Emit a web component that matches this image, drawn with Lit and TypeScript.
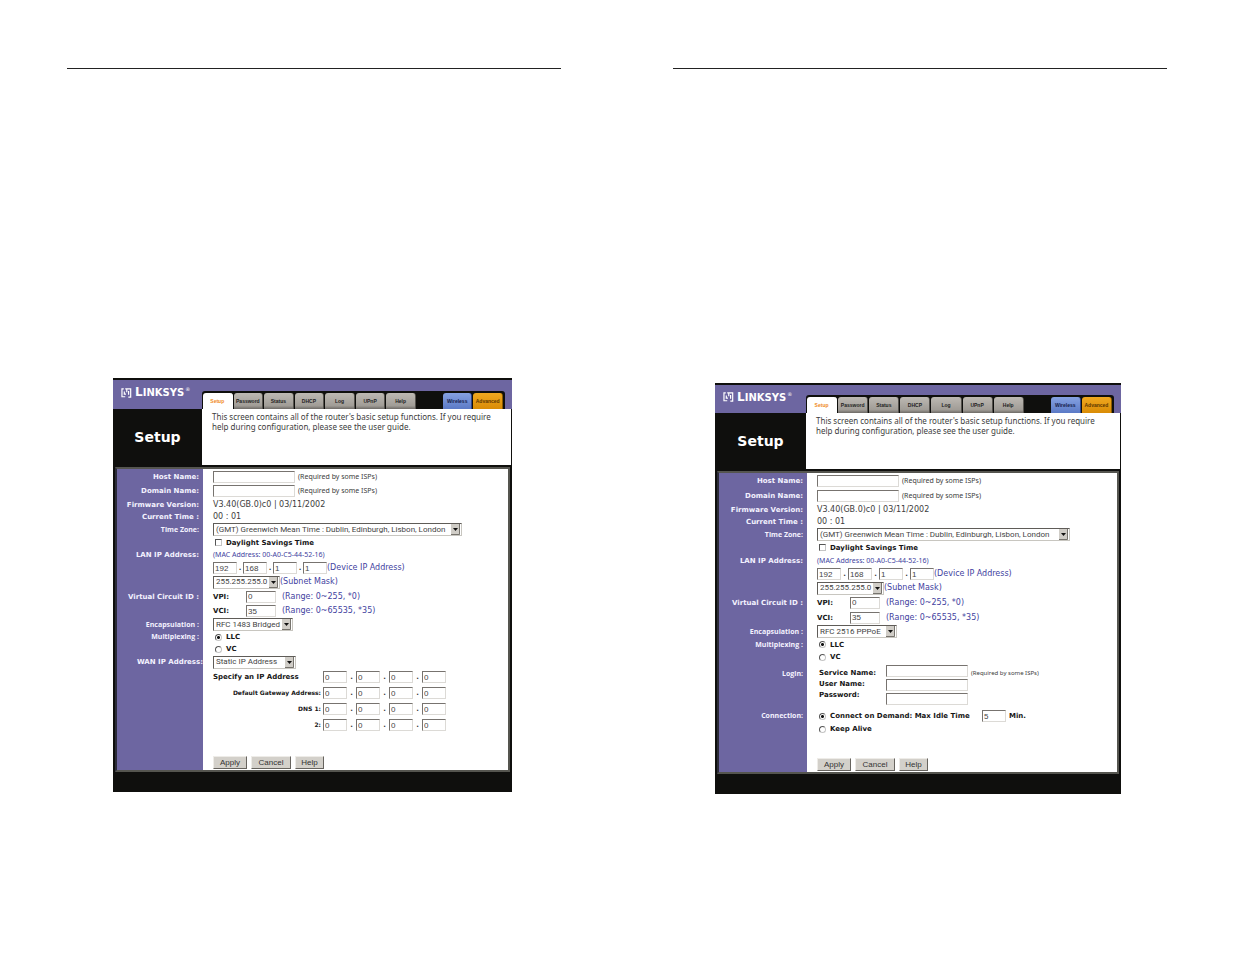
import { LitElement, html, css, nothing, TemplateResult } from "lit";
import { customElement, property } from "lit/decorators.js";

const logoMark = html`<svg class="mark" viewBox="0 0 12 11" aria-hidden="true">
  <path d="M1 .4v9.2h3.600M1 1h2M3.600 3.800v3h1.800M4.600 1h6v9H8M6.300 1v3.800M8.300 3.400v4" fill="none" stroke="#fff" stroke-width="1.300" />
</svg>`;

const TABS = ["Setup", "Password", "Status", "DHCP", "Log", "UPnP", "Help"];

@customElement("router-setup")
export class RouterSetup extends LitElement {
  @property() mode: "static" | "pppoe" = "static";

  static styles = css`
    :host {
      display: block;
      --black: #0f0f0d;
      --purple: #6d66a1;
      --blue: #4242a0;
      --logo: 89px;
      --bar: 29px;
      --label: 86px;
      --dot: 6px;
      font: 7px/10px "DejaVu Sans", Verdana, sans-serif;
      color: #3c3c3c;
      background: #fff;
    }
    :host([mode="pppoe"]) {
      --logo: 91px;
      --bar: 28px;
      --label: 88px;
      --dot: 7px;
    }
    * { box-sizing: border-box; }
    .top {
      display: grid;
      grid-template-columns: var(--logo) 1fr;
      background: var(--purple);
      border-top: 2px solid var(--black);
    }
    .brand {
      display: flex;
      align-items: center;
      gap: 3px;
      height: var(--bar);
      padding: 0 0 4px 8px;
      color: #fff;
    }
    .mark { width: 11px; height: 10px; flex: none; }
    .name { font: bold 10px/12px "DejaVu Sans", sans-serif; white-space: nowrap; }
    .name b { font-size: 12px; }
    .name sup { font: 5px/5px "DejaVu Sans", sans-serif; vertical-align: 5px; margin-left: 1px; }
    .nav {
      display: grid;
      grid-template-columns: repeat(7, 1fr) 25px repeat(2, 1fr);
      gap: 1px;
      align-self: end;
      margin-right: 7px;
      padding: 2px 2px 0 1px;
      background: var(--black);
      border-radius: 3px 3px 0 0;
    }
    .tab {
      height: 16px;
      border-radius: 3px 3px 0 0;
      border-right: 1px solid #55524d;
      background: linear-gradient(#bdb9b3, #a09c96 80%, #6d6a66);
      color: #222;
      font: bold 5px/16px "Liberation Sans", Arial, sans-serif;
      text-align: center;
      text-decoration: none;
    }
    .tab.on { background: #fff; color: #f08a24; border-color: #fff; }
    .tab.wireless { grid-column: 9; background: linear-gradient(#86a2e2, #5b7ac6); color: #15204a; border-color: #32488a; }
    .tab.advanced { background: linear-gradient(#f0a820, #d98c06); color: #5c3600; border-color: #8a5a00; }
    .intro {
      display: grid;
      grid-template-columns: var(--logo) 1fr;
      height: 56px;
      border-right: 1px solid var(--black);
    }
    .intro h1 {
      margin: 0;
      background: var(--black);
      color: #fff;
      font: bold 14px/56px "DejaVu Sans", Verdana, sans-serif;
      text-align: center;
    }
    .intro p { margin: 0; padding: 3px 0 0 10px; font: 8px/10px "Noto Sans", sans-serif; white-space: nowrap; }
    .frame { border: 2px solid var(--black); border-bottom: 20px solid var(--black); }
    form {
      border: 2px solid #55554f;
      border-left-color: #2c2c38;
      background: linear-gradient(to right, var(--purple) var(--label), #fff var(--label));
    }
    .row { display: grid; grid-template-columns: var(--label) 1fr; }
    .h12 { height: 12px; } .h13 { height: 13px; } .h14 { height: 14px; }
    .h15 { height: 15px; } .h16 { height: 16px; }
    .cap {
      align-self: center;
      padding-right: 4px;
      color: #f4f2ff;
      font-weight: bold;
      text-align: right;
      white-space: nowrap;
    }
    .cap.flush { padding-right: 0; }
    .cap.alt { font: bold 7px/10px "Open Sans", "Noto Sans", sans-serif; }
    .val { display: flex; align-items: center; padding-left: 10px; white-space: nowrap; }
    .strong { color: #161616; font-weight: bold; }
    .plain, .blue { font-size: 8px; }
    .blue { color: var(--blue); }
    .tiny { font: 7px/10px "Noto Sans", sans-serif; }
    .mini { font: 6px/10px "Noto Sans", sans-serif; }
    .small { font-size: 6px; }
    .after { margin-left: 3px; }
    .far { margin-left: 6px; }
    input, select, button { margin: 0; font: 8px/10px "Liberation Sans", Arial, sans-serif; color: #444; border-radius: 0; }
    .box {
      height: 12px;
      padding: 0 1px;
      border: 1px solid #dcdad6;
      border-top-color: #77736f;
      border-left-color: #77736f;
      background: #fff;
      outline: 0;
    }
    .wide { width: 82px; }
    .oct { width: 24px; }
    .vc { width: 30px; }
    .dot { width: var(--dot); text-align: center; font-weight: bold; }
    .gate .dot { width: 9px; }
    .gate .lead { width: 110px; padding-right: 2px; text-align: right; }
    .gate .lead.first { text-align: left; }
    .vlabel { width: 33px; }
    .idle { min-width: 152px; }
    .select { display: grid; grid-template-columns: 1fr 11px; height: 13px; }
    .select select {
      grid-area: 1 / 1 / 2 / 3;
      appearance: none;
      min-width: 0;
      padding: 0 11px 0 2px;
      border: 1px solid #c8c6c0;
      border-top-color: #5f5c58;
      border-left-color: #5f5c58;
      background: #fff;
      font-family: Roboto, "Liberation Sans", sans-serif;
    }
    .select svg { grid-area: 1 / 2; width: 9px; height: 11px; align-self: center; pointer-events: none; }
    .s-zone { width: 249px; } .s-mask { width: 67px; } .s-enc { width: 80px; } .s-wan { width: 83px; }
    :host([mode="pppoe"]) .s-zone { width: 253px; }
    .check, .radio {
      appearance: none;
      flex: none;
      width: 7px;
      height: 7px;
      margin: 0 4px 0 2px;
      border: 1px solid #c4c4c4;
      border-top-color: #555;
      border-left-color: #555;
    }
    .radio { border-radius: 50%; }
    .radio:checked { background: radial-gradient(circle, #111 1px, #fff 2px); }
    .login { height: 44px; margin-top: 2px; }
    .login .cap { align-self: start; padding-top: 4px; }
    .login .val { align-items: start; }
    .names { display: grid; grid-auto-rows: 11px; width: 69px; padding: 3px 0 0 2px; }
    .fields { display: grid; gap: 2px; }
    .login .mini { padding-top: 3px; }
    .space { height: 22px; }
    .actions .val { gap: 4px; align-items: center; }
    button {
      height: 13px;
      padding: 0;
      border: 1px solid #fff;
      border-color: #eeece8 #66635e #66635e #eeece8;
      background: #d3d0ca;
      color: #333;
    }
    .b1 { width: 34px; } .b2 { width: 40px; } .b3 { width: 29px; }
  `;

  private row(height: string, caption: string, content: unknown, capClass = "", forId = ""): TemplateResult {
    const cap = forId
      ? html`<label class="cap ${capClass}" for=${forId}>${caption}</label>`
      : html`<span class="cap ${capClass}">${caption}</span>`;
    return html`<div class="row ${height}">${cap}<div class="val">${content}</div></div>`;
  }

  private select(id: string, cls: string, text: string, label: string) {
    return html`<span class="select ${cls}">
      <select id=${id} aria-label=${label}><option>${text}</option></select>
      <svg viewBox="0 0 9 11" aria-hidden="true">
        <rect width="9" height="11" fill="#d0cdc7" /><path d="M8.5 0v10.5H0" fill="none" stroke="#77746e" />
        <path d="M2 4h5L4.500 7z" fill="#111" />
      </svg>
    </span>`;
  }

  private octets(values: string[], label: string) {
    return values.map(
      (v, i) => html`${i ? html`<span class="dot">.</span>` : nothing}<input class="box oct" .value=${v} aria-label="${label} part ${i + 1}" />`
    );
  }

  private gateway(height: string, text: string, cls: string) {
    return this.row(height, "", html`<span class="lead strong ${cls}">${text}</span>${this.octets(["0", "0", "0", "0"], text)}`);
  }

  private staticRows() {
    return html`
      ${this.row("h14", "WAN IP Address:", this.select("wan", "s-wan", "Static IP Address", "WAN IP Address"), "flush", "wan")}
      <div class="gate">
        ${this.gateway("h16", "Specify an IP Address", "first")}
        ${this.gateway("h16", "Default Gateway Address:", "small")}
        ${this.gateway("h16", "DNS 1:", "small")}
        ${this.gateway("h16", "2:", "small")}
      </div>`;
  }

  private pppoeRows() {
    return html`
      <div class="row login">
        <span class="cap alt">Login:</span>
        <div class="val">
          <div class="names strong">
            <label for="service">Service Name:</label><label for="user">User Name:</label><label for="pass">Password:</label>
          </div>
          <div class="fields">
            <input class="box wide" id="service" /><input class="box wide" id="user" /><input class="box wide" id="pass" type="password" />
          </div>
          <span class="mini after">(Required by some ISPs)</span>
        </div>
      </div>
      ${this.row("h14", "Connection:", html`<input class="radio" type="radio" name="conn" id="demand" checked />
        <label class="strong idle" for="demand">Connect on Demand: Max Idle Time</label>
        <input class="box oct" aria-label="Max idle time" .value=${"5"} /><span class="strong after">Min.</span>`, "alt")}
      ${this.row("h12", "", html`<input class="radio" type="radio" name="conn" id="keep" /><label class="strong" for="keep">Keep Alive</label>`)}`;
  }

  render() {
    const ppp = this.mode === "pppoe";
    return html`
      <header class="top">
        <div class="brand">${logoMark}<span class="name"><b>L</b>INKSYS<sup>®</sup></span></div>
        <nav class="nav">
          ${TABS.map((t, i) => html`<a href="#" class="tab ${i ? "" : "on"}">${t}</a>`)}
          <a href="#" class="tab wireless">Wireless</a><a href="#" class="tab advanced">Advanced</a>
        </nav>
      </header>
      <div class="intro">
        <h1>Setup</h1>
        <p>This screen contains all of the router's basic setup functions. If you require<br />help during configuration, please see the user guide.</p>
      </div>
      <div class="frame">
        <form>
          ${this.row("h15", "Host Name:", html`<input class="box wide" id="host" /><span class="tiny after">(Required by some ISPs)</span>`, "", "host")}
          ${this.row(ppp ? "h15" : "h14", "Domain Name:", html`<input class="box wide" id="domain" /><span class="tiny after">(Required by some ISPs)</span>`, "", "domain")}
          ${this.row("h13", "Firmware Version:", html`<span class="plain">V3.40(GB.0)c0 | 03/11/2002</span>`)}
          ${this.row("h12", "Current Time :", html`<span class="plain">00 : 01</span>`)}
          ${this.row("h13", "Time Zone:", this.select("zone", "s-zone", "(GMT) Greenwich Mean Time : Dublin, Edinburgh, Lisbon, London", "Time Zone"), "alt", "zone")}
          ${this.row("h13", "", html`<input class="check" type="checkbox" id="dst" /><label class="strong" for="dst">Daylight Savings Time</label>`)}
          ${this.row(ppp ? "h13" : "h12", "LAN IP Address:", html`<span class="blue tiny">(MAC Address: 00-A0-C5-44-52-16)</span>`)}
          ${this.row("h14", "", html`${this.octets(["192", "168", "1", "1"], "LAN IP")}<span class="blue">(Device IP Address)</span>`)}
          ${this.row("h14", "", html`${this.select("mask", "s-mask", "255.255.255.0", "Subnet Mask")}<label class="blue" for="mask">(Subnet Mask)</label>`)}
          ${this.row("h15", "Virtual Circuit ID :", html`<label class="vlabel strong" for="vpi">VPI:</label><input class="box vc" id="vpi" .value=${"0"} /><span class="blue far">(Range: 0~255, *0)</span>`)}
          ${this.row(ppp ? "h15" : "h14", "", html`<label class="vlabel strong" for="vci">VCI:</label><input class="box vc" id="vci" .value=${"35"} /><span class="blue far">(Range: 0~65535, *35)</span>`)}
          ${this.row("h13", "Encapsulation :", this.select("enc", "s-enc", ppp ? "RFC 2516 PPPoE" : "RFC 1483 Bridged", "Encapsulation"), "alt", "enc")}
          ${this.row(ppp ? "h13" : "h12", "Multiplexing :", html`<input class="radio" type="radio" name="mux" id="llc" checked /><label class="strong" for="llc">LLC</label>`, "alt")}
          ${this.row("h12", "", html`<input class="radio" type="radio" name="mux" id="vc" /><label class="strong" for="vc">VC</label>`)}
          ${ppp ? this.pppoeRows() : this.staticRows()}
          <div class="space"></div>
          <div class="row h15 actions">
            <span></span>
            <div class="val">
              <button type="button" class="b1">Apply</button><button type="button" class="b2">Cancel</button><button type="button" class="b3">Help</button>
            </div>
          </div>
        </form>
      </div>`;
  }
}

@customElement("app-root")
export class AppRoot extends LitElement {
  static styles = css`
    :host {
      display: grid;
      grid-template-columns: 1fr 1fr;
      gap: 112px;
      min-height: 100vh;
      box-sizing: border-box;
      padding: 68px 68px 40px 67px;
      background: #fff;
    }
    .page { border-top: 1px solid #222; min-width: 0; }
    .left { padding: 309px 49px 0 46px; }
    .right { padding: 314px 46px 0 42px; }
  `;

  render() {
    return html`
      <section class="page left"><router-setup mode="static"></router-setup></section>
      <section class="page right"><router-setup mode="pppoe"></router-setup></section>
    `;
  }
}
